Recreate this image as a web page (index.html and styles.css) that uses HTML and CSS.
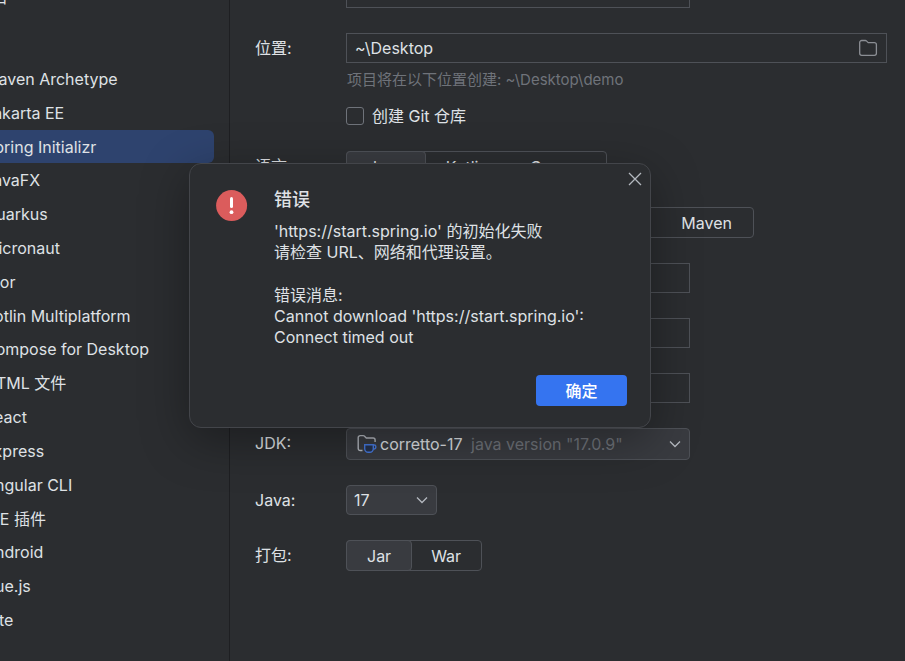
FILE: index.html
```html
<!DOCTYPE html>
<html lang="zh-CN">
<head>
<meta charset="utf-8">
<meta name="viewport" content="width=device-width, initial-scale=1">
<title>新建项目</title>
<link rel="stylesheet" href="styles.css">
</head>
<body>
<div class="window">
  <nav class="sidebar" aria-label="生成器">
    <a class="top-link" href="#">空项目</a>
    <ul class="generators">
      <li><a href="#">Maven Archetype</a></li>
      <li><a href="#">Jakarta EE</a></li>
      <li><a class="selected" href="#" aria-current="page">Spring Initializr</a></li>
      <li><a href="#">JavaFX</a></li>
      <li><a href="#">Quarkus</a></li>
      <li><a href="#">Micronaut</a></li>
      <li><a href="#">Ktor</a></li>
      <li><a href="#">Kotlin Multiplatform</a></li>
      <li><a href="#">Compose for Desktop</a></li>
      <li><a href="#">HTML 文件</a></li>
      <li><a href="#">React</a></li>
      <li><a href="#">Express</a></li>
      <li><a href="#">Angular CLI</a></li>
      <li><a href="#">IDE 插件</a></li>
      <li><a href="#">Android</a></li>
      <li><a href="#">Vue.js</a></li>
      <li><a href="#">Vite</a></li>
    </ul>
  </nav>

  <form class="settings">
    <div class="row">
      <span></span>
      <input class="field medium" type="text" aria-label="名称">
    </div>
    <div class="row">
      <label class="label" for="location">位置:</label>
      <div class="location">
        <div class="field path">
          <input id="location" type="text" value="~\Desktop">
          <button class="icon-button" type="button" aria-label="浏览">
            <svg width="20" height="18" viewBox="0 0 20 18" fill="none" stroke="#8b8e94" stroke-width="1.3"><path d="M1.700 3.500a2 2 0 0 1 2-2H7.400a1.500 1.500 0 0 1 1 .4L10.200 3.700h6.200a2 2 0 0 1 2 2v8.600a2 2 0 0 1-2 2H3.700a2 2 0 0 1-2-2z"/></svg>
          </button>
        </div>
        <p class="hint">项目将在以下位置创建: ~\Desktop\demo</p>
        <label class="check"><input type="checkbox">创建 Git 仓库</label>
      </div>
    </div>
    <div class="row">
      <span class="label">语言:</span>
      <div class="segmented wide">
        <button type="button" class="on">Java</button><button type="button">Kotlin</button><button type="button">Groovy</button>
      </div>
    </div>
    <div class="row">
      <span class="label">类型:</span>
      <div class="segmented wide">
        <button type="button" class="on">Gradle - Groovy</button><button type="button">Gradle - Kotlin</button><button type="button">Maven</button>
      </div>
    </div>
    <div class="row">
      <label class="label" for="group">组:</label>
      <input class="field medium" id="group" type="text">
    </div>
    <div class="row">
      <label class="label" for="artifact">工件:</label>
      <input class="field medium" id="artifact" type="text">
    </div>
    <div class="row">
      <label class="label" for="package">软件包名称:</label>
      <input class="field medium" id="package" type="text">
    </div>
    <div class="row">
      <label class="label" for="jdk">JDK:</label>
      <div class="dropdown jdk">
        <select id="jdk"><option>corretto-17</option></select>
        <svg class="jdk-icon" width="20" height="20" viewBox="0 0 20 20" fill="none" stroke-width="1.4">
          <path d="M5.500 16.500H3.200a2 2 0 0 1-2-2V3.600a2 2 0 0 1 2-2h3.100a1.500 1.500 0 0 1 1 .4L9.300 4h6.800a2 2 0 0 1 2 2v2" stroke="#b4b8bf"/>
          <path d="M7.700 10.700h8.600v4a3.500 3.500 0 0 1-3.500 3.500h-1.600a3.500 3.500 0 0 1-3.500-3.500z" fill="#25324d" stroke="#4678dc"/>
          <path d="M16.300 11h1a1.500 1.500 0 0 1 1.500 1.500v.7a1.800 1.800 0 0 1-1.800 1.800h-.7" stroke="#4678dc"/>
        </svg>
        <span class="version">java version "17.0.9"</span>
        <svg class="chevron" width="12" height="8" viewBox="0 0 12 8" fill="none" stroke="#b4b8bf" stroke-width="1.3"><path d="M1 1.500 6 6.500 11 1.500"/></svg>
      </div>
    </div>
    <div class="row">
      <label class="label" for="java">Java:</label>
      <div class="dropdown java">
        <select id="java"><option>17</option></select>
        <svg class="chevron" width="12" height="8" viewBox="0 0 12 8" fill="none" stroke="#b4b8bf" stroke-width="1.3"><path d="M1 1.500 6 6.500 11 1.500"/></svg>
      </div>
    </div>
    <div class="row">
      <span class="label">打包:</span>
      <div class="segmented">
        <button type="button" class="on">Jar</button><button type="button">War</button>
      </div>
    </div>
  </form>
</div>

<section class="dialog" role="alertdialog" aria-labelledby="dialog-title" aria-describedby="dialog-text">
  <button class="icon-button close" type="button" aria-label="关闭">
    <svg width="14" height="14" viewBox="0 0 14 14" fill="none" stroke="#b4b8bf" stroke-width="1.3"><path d="M1 1 13 13M13 1 1 13"/></svg>
  </button>
  <svg class="error-icon" width="32" height="32" viewBox="0 0 32 32"><circle cx="15.600" cy="15.600" r="15.500" fill="#db5c5c"/><path d="M15.500 8.500v8" stroke="#fff" stroke-width="3" stroke-linecap="round"/><circle cx="15.500" cy="22.200" r="1.900" fill="#fff"/></svg>
  <div class="message">
    <h1 id="dialog-title">错误</h1>
    <div id="dialog-text">
      <p>'https://start.spring.io' 的初始化失败<br>请检查 URL、网络和代理设置。</p>
      <p>错误消息:<br>Cannot download 'https://start.spring.io': Connect timed out</p>
    </div>
  </div>
  <div class="actions"><button class="primary" type="button">确定</button></div>
</section>
</body>
</html>
```
FILE: styles.css
```css
* {
  box-sizing: border-box;
}

body {
  margin: 0;
  overflow: hidden;
  background: #2b2d30;
  color: #dfe1e5;
  font: 16px/20px Inter, "Noto Sans CJK SC", sans-serif;
}

button,
input,
select {
  margin: 0;
  color: inherit;
  font: inherit;
}

a {
  color: inherit;
  text-decoration: none;
}

.window {
  display: flex;
  height: 100vh;
}

.sidebar {
  display: flex;
  flex: none;
  flex-direction: column;
  width: 270px;
  margin-left: -40px;
  padding-bottom: 24px;
  border-right: 1px solid #1e1f22;
}

.top-link {
  height: 62px;
  margin-top: -13px;
  margin-bottom: 13px;
  line-height: 20px;
}

.generators {
  display: grid;
  flex: 1;
  grid-auto-rows: 1fr;
  margin: 0;
  padding: 0 15px 0 0;
  list-style: none;
}

.generators a {
  display: flex;
  align-items: center;
  height: 100%;
  padding-left: 24px;
  border-radius: 6px;
}

.generators .selected {
  background: #2e436e;
}

.settings {
  display: flex;
  flex: 1;
  flex-direction: column;
  gap: 25px;
  margin-top: -22px;
  padding: 0 18px 0 25px;
}

.row {
  display: grid;
  grid-template-columns: 91px minmax(0, 1fr);
  align-items: start;
}

.label {
  line-height: 30px;
  white-space: nowrap;
}

.field {
  width: 100%;
  height: 30px;
  padding: 0 8px;
  border: 1px solid #4e5157;
  outline: 0;
  background: transparent;
}

.medium {
  max-width: 344px;
}

.path {
  display: flex;
  align-items: center;
}

.path input {
  flex: 1;
  min-width: 0;
  padding: 0;
  border: 0;
  outline: 0;
  background: none;
}

.icon-button {
  display: flex;
  padding: 0;
  border: 0;
  background: none;
}

.hint {
  margin: 7px 0 16px;
  padding-left: 1px;
  color: #6f737a;
  font-size: 15px;
}

.check {
  display: flex;
  align-items: center;
  gap: 8px;
}

.check input {
  width: 18px;
  height: 18px;
  border: 1px solid #6f737a;
  border-radius: 3px;
  appearance: none;
}

.segmented {
  display: flex;
  justify-self: start;
  height: 31px;
  border: 1px solid #4e5157;
  border-radius: 4px;
}

.segmented button {
  margin: -1px;
  padding: 0 20px;
  border: 1px solid transparent;
  border-radius: 4px;
  background: none;
}

.wide button {
  padding: 0 21px;
}

.segmented .on {
  border-color: #4e5157;
  background: #393b40;
}

.dropdown {
  display: grid;
  align-items: center;
}

.dropdown > * {
  grid-area: 1 / 1;
}

.dropdown select {
  width: 100%;
  height: 30px;
  padding: 0 7px;
  border: 1px solid #4e5157;
  border-radius: 4px;
  background: #393b40;
  appearance: none;
}

.dropdown svg,
.version {
  pointer-events: none;
}

.chevron {
  justify-self: end;
  margin-right: 9px;
}

.java {
  width: 91px;
}

.jdk {
  max-width: 344px;
}

.dropdown.jdk select {
  height: 32px;
  padding-left: 33px;
}

.jdk-icon {
  margin-left: 11px;
}

.version {
  margin-left: 125px;
  color: #6f737a;
}

.dialog {
  position: absolute;
  top: 163px;
  left: 189px;
  display: grid;
  grid-template-columns: 32px minmax(0, 1fr);
  column-gap: 26px;
  width: 462px;
  padding: 26px 23px 21px 26px;
  border: 1px solid #43454a;
  border-radius: 12px;
  background: #2b2d30;
  box-shadow: 0 12px 48px rgba(0, 0, 0, 0.35);
}

.close {
  position: absolute;
  top: 8px;
  right: 8px;
}

.message {
  padding-right: 24px;
  line-height: 21px;
}

.message h1 {
  margin: 0 0 11px;
  font-size: 18px;
  font-weight: 500;
  line-height: 20px;
}

.message p {
  margin: 0 0 22px;
}

.actions {
  display: flex;
  grid-column: 1 / -1;
  justify-content: flex-end;
  margin-top: 5px;
}

.primary {
  width: 91px;
  height: 31px;
  border: 0;
  border-radius: 4px;
  background: #3574f0;
  color: #fff;
  font-weight: 500;
}
```
